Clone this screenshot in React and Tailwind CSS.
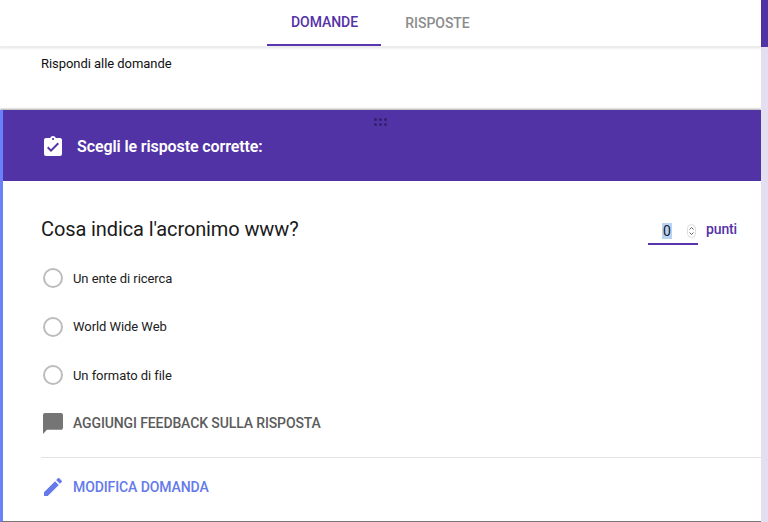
import React from "react";

const Radio = ({ label }) => (
  <div className="flex h-[48.5px] items-center">
    <span className="ml-[2px] h-5 w-5 rounded-full border-2 border-[#bdbdbd]" />
    <span className="ml-[10px] text-[13px] tracking-[-0.06px] text-[#212121]">{label}</span>
  </div>
);

export default function App() {
  return (
    <div className="flex h-[522px] w-[768px] overflow-hidden bg-white font-['Roboto',sans-serif]">
      <div className="flex w-[761px] shrink-0 flex-col">
        <header className="relative z-10 flex h-[47px] shrink-0 justify-center border-b border-[#ececec] bg-white pr-[2px] shadow-[0_1px_3px_rgba(0,0,0,0.12)]">
          <div className="flex h-[46px] w-[114px] items-center justify-center border-b-2 border-[#5a35ad] pl-[2px] text-sm font-medium tracking-[-0.05px] text-[#5432a8]">
            DOMANDE
          </div>
          <div className="flex h-[46px] w-[112px] items-center justify-center pl-[2px] text-sm font-medium tracking-[-0.05px] text-[#8c8c8c]">
            RISPOSTE
          </div>
        </header>
        <div className="h-[63px] shrink-0 pl-[41px] pt-[9px] text-[13px] leading-4 tracking-[-0.05px] text-[#111111]">
          Rispondi alle domande
        </div>
        <section className="flex min-h-0 flex-1 flex-col border-b border-[#777777] border-l-[3px] border-l-[#6a80fb] shadow-[0_-1px_2px_rgba(0,0,0,0.35)]">
          <div className="relative flex h-[71px] shrink-0 items-center bg-[#5233a5] pl-[38px] pt-[3px]">
            <svg className="h-6 w-6" viewBox="0 0 24 24" fill="#ffffff">
              <path d="M19 3h-4.18C14.4 1.84 13.3 1 12 1s-2.4.84-2.82 2H5c-1.1 0-2 .9-2 2v14c0 1.1.9 2 2 2h14c1.1 0 2-.9 2-2V5c0-1.1-.9-2-2-2zm-7 0c.55 0 1 .45 1 1s-.45 1-1 1-1-.45-1-1 .45-1 1-1zm-2 14l-4-4 1.41-1.41L10 14.17l6.59-6.59L18 9l-8 8z" />
            </svg>
            <span className="ml-[12px] text-base font-semibold tracking-[-0.1px] text-white">Scegli le risposte corrette:</span>
            <div className="absolute left-[371px] top-[8px] grid grid-cols-3 gap-x-[2px] gap-y-[2px]">
              {[0, 1, 2, 3, 4, 5].map((i) => (
                <span key={i} className="h-[3px] w-[3px] rounded-full bg-[#33206e]" />
              ))}
            </div>
          </div>
          <div className="flex min-h-0 flex-1 flex-col pl-[38px]">
            <div className="flex h-[73px] shrink-0 items-start justify-between pr-[24px] pt-[36px]">
              <div className="text-xl leading-6 tracking-[-0.11px] text-[#1a1a1a]">Cosa indica l'acronimo www?</div>
              <div className="flex items-start">
                <div className="-mt-[3px] flex h-[31px] w-[50px] items-center border-b-2 border-[#5a35ad] pl-[14px] pt-[5px]">
                  <span className="bg-[#b9d3f5] px-[1px] text-sm leading-4 text-[#1a1a2a]">0</span>
                  <span className="ml-[15px] flex h-[14px] w-[9px] flex-col items-center justify-center rounded-full border border-[#dddddd]">
                    <svg className="h-[10px] w-[7px]" viewBox="0 0 7 10" fill="none" stroke="#555555" strokeWidth="0.9">
                      <path d="M1.5 3.5 3.5 1.5 5.5 3.5M1.5 6.5 3.5 8.5 5.5 6.5" />
                    </svg>
                  </span>
                </div>
                <span className="ml-2 mt-[2px] text-sm font-medium leading-5 tracking-[-0.15px] text-[#5432a8]">punti</span>
              </div>
            </div>
            <Radio label="Un ente di ricerca" />
            <Radio label="World Wide Web" />
            <Radio label="Un formato di file" />
            <div className="flex h-[46px] shrink-0 items-center">
              <svg className="ml-[2px] mt-[1px] h-[21px] w-[20px]" viewBox="2 2 20 20" preserveAspectRatio="none" fill="#757575">
                <path d="M20 2H4c-1.1 0-2 .9-2 2v18l4-4h14c1.1 0 2-.9 2-2V4c0-1.1-.9-2-2-2z" />
              </svg>
              <span className="ml-[10px] text-sm font-medium tracking-[-0.12px] text-[#5c5c5c]">AGGIUNGI FEEDBACK SULLA RISPOSTA</span>
            </div>
            <div className="mt-[11px] flex flex-1 items-start border-t border-[#e4e4e4] pt-[17px]">
              <svg className="h-6 w-6" viewBox="0 0 24 24" fill="#6479ea">
                <path d="M3 17.25V21h3.75L17.81 9.94l-3.75-3.75L3 17.25zM20.71 7.04c.39-.39.39-1.02 0-1.41l-2.34-2.34c-.39-.39-1.02-.39-1.41 0l-1.83 1.83 3.75 3.75 1.83-1.83z" />
              </svg>
              <span className="ml-[8px] text-sm font-medium leading-6 tracking-[-0.1px] text-[#6479ea]">MODIFICA DOMANDA</span>
            </div>
          </div>
        </section>
      </div>
      <aside className="flex w-[7px] shrink-0 flex-col bg-[#e3dff0]">
        <div className="h-[47px] bg-[#5233a5]" />
      </aside>
    </div>
  );
}
